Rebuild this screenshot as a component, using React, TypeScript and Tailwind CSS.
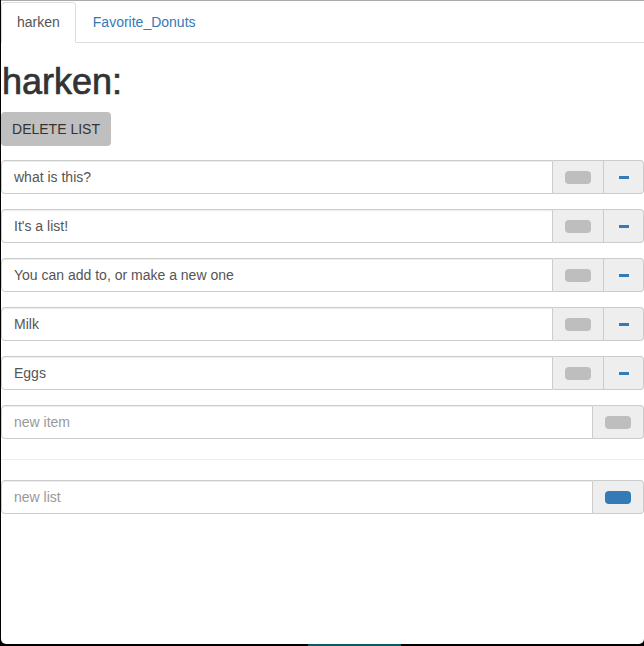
import React from 'react';

const items = ['what is this?', "It's a list!", 'You can add to, or make a new one', 'Milk', 'Eggs'];

const Pill = ({ blue }: { blue?: boolean }) => (
  <span className={`block w-[26px] h-[13px] rounded-[4px] ${blue ? 'bg-[#337ab7]' : 'bg-[#bebebe]'}`} />
);

const ItemRow = ({ text }: { text: string }) => (
  <div className="flex h-[34px] mb-[15px]">
    <div className="flex-1 flex items-center border border-[#ccc] rounded-l-[4px] px-[12px] text-[14px] text-[#555] shadow-[inset_0_1px_1px_rgba(0,0,0,0.075)]">
      {text}
    </div>
    <div className="w-[51px] flex items-center justify-center bg-[#eee] border-y border-r border-[#ccc]">
      <Pill />
    </div>
    <div className="w-[40px] flex items-center justify-center bg-[#eee] border-y border-r border-[#ccc] rounded-r-[4px]">
      <span className="block w-[10px] h-[3px] bg-[#337ab7]" />
    </div>
  </div>
);

const NewRow = ({ placeholder, blue }: { placeholder: string; blue?: boolean }) => (
  <div className="flex h-[34px]">
    <div className="flex-1 flex items-center border border-[#ccc] rounded-l-[4px] px-[12px] text-[14px] text-[#999] shadow-[inset_0_1px_1px_rgba(0,0,0,0.075)]">
      {placeholder}
    </div>
    <div className="w-[51px] flex items-center justify-center bg-[#eee] border-y border-r border-[#ccc] rounded-r-[4px]">
      <Pill blue={blue} />
    </div>
  </div>
);

export default function App() {
  return (
    <div className="w-[644px] h-[646px] bg-black overflow-hidden relative" style={{ fontFamily: '"Liberation Sans", Arial, sans-serif' }}>
      <div className="ml-[1px] h-[644px] bg-white border-t border-[#aaa] rounded-b-[5px] flex flex-col">
        {/* tabs */}
        <div className="flex h-[42px] border-b border-[#ddd] pt-[1px] text-[14px]">
          <div className="h-[41px] -mb-[1px] px-[15px] flex items-center border border-[#ddd] border-b-white rounded-t-[4px] bg-white text-[#555]">
            harken
          </div>
          <div className="h-[41px] ml-[2px] px-[15px] flex items-center text-[#337ab7]">Favorite_Donuts</div>
        </div>

        <h1 className="mt-[19px] ml-[1px] text-[36px] leading-[40px] font-medium text-[#333] [-webkit-text-stroke:0.7px_#333]">harken:</h1>

        <div className="mt-[10px] mb-[14px] w-[110px] h-[34px] flex items-center justify-center bg-[#bfbfbf] rounded-[4px] text-[14px] text-[#333]">
          DELETE LIST
        </div>

        {items.map((t) => (
          <ItemRow key={t} text={t} />
        ))}

        <NewRow placeholder="new item" />

        <div className="mt-[20px] mb-[20px] h-[1px] bg-[#eee]" />

        <NewRow placeholder="new list" blue />
      </div>
      <div className="absolute bottom-0 left-[308px] w-[93px] h-[2px] bg-[#0b5960]" />
    </div>
  );
}
